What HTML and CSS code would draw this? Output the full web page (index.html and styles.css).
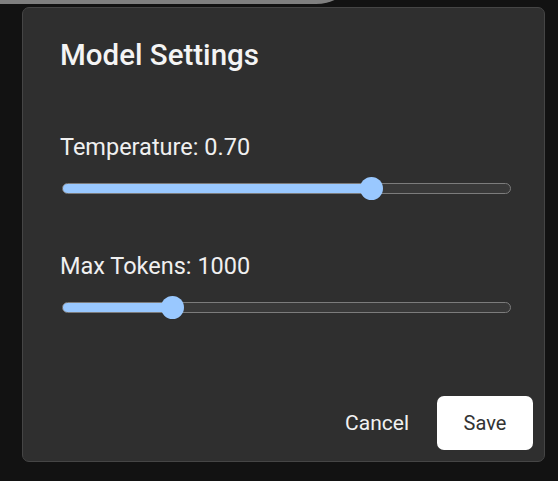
FILE: index.html
```html
<!DOCTYPE html>
<html lang="en">
<head>
<meta charset="utf-8">
<title>Model Settings</title>
<link rel="stylesheet" href="styles.css">
</head>
<body>
<div class="backdrop-edge"></div>
<div class="modal" role="dialog" aria-labelledby="modal-title">
  <h2 class="modal-title" id="modal-title">Model Settings</h2>
  <div class="field">
    <label class="field-label" for="temp">Temperature: 0.70</label>
    <input class="slider" id="temp" type="range" min="0" max="1" step="0.01" value="0.7" style="--f:0.7">
  </div>
  <div class="field">
    <label class="field-label" for="tokens">Max Tokens: 1000</label>
    <input class="slider" id="tokens" type="range" min="100" max="4000" step="1" value="1000" style="--f:0.2308">
  </div>
  <div class="actions">
    <button class="btn btn-text" type="button">Cancel</button>
    <button class="btn btn-primary" type="button">Save</button>
  </div>
</div>
</body>
</html>
```
FILE: styles.css
```css
* { box-sizing: border-box; }
html, body { margin: 0; padding: 0; }
body {
  width: 558px;
  height: 481px;
  background: #121212;
  font-family: Roboto, "Noto Sans", sans-serif;
  color: #f2f2f2;
  position: relative;
  overflow: hidden;
}
.backdrop-edge {
  position: absolute;
  left: 0;
  top: -40px;
  width: 344px;
  height: 44px;
  background: #7f7f7f;
  border-bottom-right-radius: 28px 16px;
}
.modal {
  position: relative;
  margin: 7px 0 0 22px;
  width: 523px;
  height: 455px;
  background: #2f2f2f;
  border: 1px solid #454545;
  border-radius: 7px;
  display: flex;
  flex-direction: column;
  padding: 30px 33px 11px 37px;
}
.modal-title {
  margin: 0 0 61px;
  font-size: 29.5px;
  line-height: 34px;
  font-weight: 500;
  color: #f4f4f4;
}
.field {
  display: flex;
  flex-direction: column;
  margin-bottom: 58px;
}
.field-label {
  font-size: 23.5px;
  line-height: 28px;
  font-weight: 400;
  color: #f0f0f0;
  margin-bottom: 22px;
}
.slider {
  -webkit-appearance: none;
  appearance: none;
  margin: 0 0 0 2px;
  width: 449px;
  height: 11px;
  border: 1px solid #7c7c7c;
  border-radius: 6px;
  background: linear-gradient(to right,
    #99c8ff calc(10px + var(--f) * (100% - 20px)),
    #393939 calc(10px + var(--f) * (100% - 20px)));
  outline: none;
}
.slider::-webkit-slider-thumb {
  -webkit-appearance: none;
  appearance: none;
  width: 23px;
  height: 23px;
  border-radius: 50%;
  background: #99c8ff;
  border: none;
}
.actions {
  margin-top: auto;
  display: flex;
  justify-content: flex-end;
  align-items: center;
  gap: 28px;
  margin-right: -22px;
}
.btn {
  font-family: inherit;
  font-size: 20px;
  border: none;
  cursor: pointer;
}
.btn-text {
  background: transparent;
  color: #f2f2f2;
  font-size: 21px;
  font-weight: 400;
  padding: 0;
}
.btn-primary {
  width: 96px;
  height: 54px;
  background: #ffffff;
  color: #333333;
  border-radius: 7px;
  font-weight: 400;
}
```
